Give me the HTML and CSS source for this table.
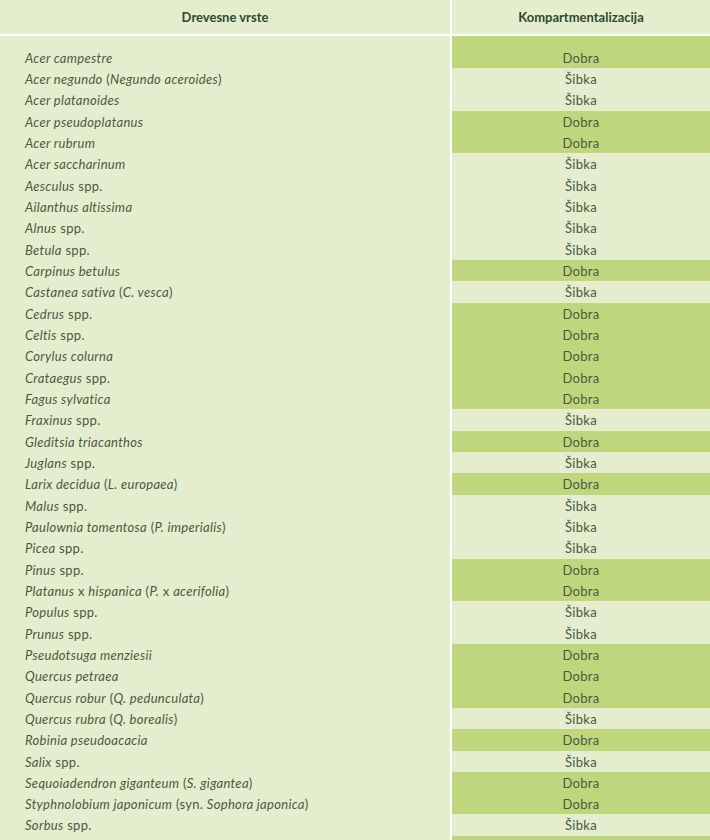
FILE: index.html
```html
<!DOCTYPE html>
<html lang="sl">
<head>
<meta charset="utf-8">
<title>Kompartmentalizacija</title>
<link rel="stylesheet" href="styles.css">
</head>
<body>
<table class="tbl">
  <thead>
    <tr>
      <th class="c-name">Drevesne vrste</th>
      <th class="c-val">Kompartmentalizacija</th>
    </tr>
  </thead>
  <tbody>
    <tr class="first"><td class="c-name"><i>Acer campestre</i></td><td class="c-val good">Dobra</td></tr>
    <tr><td class="c-name"><i>Acer negundo</i> (<i>Negundo aceroides</i>)</td><td class="c-val">Šibka</td></tr>
    <tr><td class="c-name"><i>Acer platanoides</i></td><td class="c-val">Šibka</td></tr>
    <tr><td class="c-name"><i>Acer pseudoplatanus</i></td><td class="c-val good">Dobra</td></tr>
    <tr><td class="c-name"><i>Acer rubrum</i></td><td class="c-val good">Dobra</td></tr>
    <tr><td class="c-name"><i>Acer saccharinum</i></td><td class="c-val">Šibka</td></tr>
    <tr><td class="c-name"><i>Aesculus</i> spp.</td><td class="c-val">Šibka</td></tr>
    <tr><td class="c-name"><i>Ailanthus altissima</i></td><td class="c-val">Šibka</td></tr>
    <tr><td class="c-name"><i>Alnus</i> spp.</td><td class="c-val">Šibka</td></tr>
    <tr><td class="c-name"><i>Betula</i> spp.</td><td class="c-val">Šibka</td></tr>
    <tr><td class="c-name"><i>Carpinus betulus</i></td><td class="c-val good">Dobra</td></tr>
    <tr><td class="c-name"><i>Castanea sativa</i> (<i>C. vesca</i>)</td><td class="c-val">Šibka</td></tr>
    <tr><td class="c-name"><i>Cedrus</i> spp.</td><td class="c-val good">Dobra</td></tr>
    <tr><td class="c-name"><i>Celtis</i> spp.</td><td class="c-val good">Dobra</td></tr>
    <tr><td class="c-name"><i>Corylus colurna</i></td><td class="c-val good">Dobra</td></tr>
    <tr><td class="c-name"><i>Crataegus</i> spp.</td><td class="c-val good">Dobra</td></tr>
    <tr><td class="c-name"><i>Fagus sylvatica</i></td><td class="c-val good">Dobra</td></tr>
    <tr><td class="c-name"><i>Fraxinus</i> spp.</td><td class="c-val">Šibka</td></tr>
    <tr><td class="c-name"><i>Gleditsia triacanthos</i></td><td class="c-val good">Dobra</td></tr>
    <tr><td class="c-name"><i>Juglans</i> spp.</td><td class="c-val">Šibka</td></tr>
    <tr><td class="c-name"><i>Larix decidua</i> (<i>L. europaea</i>)</td><td class="c-val good">Dobra</td></tr>
    <tr><td class="c-name"><i>Malus</i> spp.</td><td class="c-val">Šibka</td></tr>
    <tr><td class="c-name"><i>Paulownia tomentosa</i> (<i>P. imperialis</i>)</td><td class="c-val">Šibka</td></tr>
    <tr><td class="c-name"><i>Picea</i> spp.</td><td class="c-val">Šibka</td></tr>
    <tr><td class="c-name"><i>Pinus</i> spp.</td><td class="c-val good">Dobra</td></tr>
    <tr><td class="c-name"><i>Platanus</i> x <i>hispanica</i> (<i>P.</i> x <i>acerifolia</i>)</td><td class="c-val good">Dobra</td></tr>
    <tr><td class="c-name"><i>Populus</i> spp.</td><td class="c-val">Šibka</td></tr>
    <tr><td class="c-name"><i>Prunus</i> spp.</td><td class="c-val">Šibka</td></tr>
    <tr><td class="c-name"><i>Pseudotsuga menziesii</i></td><td class="c-val good">Dobra</td></tr>
    <tr><td class="c-name"><i>Quercus petraea</i></td><td class="c-val good">Dobra</td></tr>
    <tr><td class="c-name"><i>Quercus robur</i> (<i>Q. pedunculata</i>)</td><td class="c-val good">Dobra</td></tr>
    <tr><td class="c-name"><i>Quercus rubra</i> (<i>Q. borealis</i>)</td><td class="c-val">Šibka</td></tr>
    <tr><td class="c-name"><i>Robinia pseudoacacia</i></td><td class="c-val good">Dobra</td></tr>
    <tr><td class="c-name"><i>Salix</i> spp.</td><td class="c-val">Šibka</td></tr>
    <tr><td class="c-name"><i>Sequoiadendron giganteum</i> (<i>S. gigantea</i>)</td><td class="c-val good">Dobra</td></tr>
    <tr><td class="c-name"><i>Styphnolobium japonicum</i> (syn. <i>Sophora japonica</i>)</td><td class="c-val good">Dobra</td></tr>
    <tr><td class="c-name"><i>Sorbus</i> spp.</td><td class="c-val">Šibka</td></tr>
    <tr class="last"><td class="c-name"></td><td class="c-val good"></td></tr>
  </tbody>
</table>
</body>
</html>
```

FILE: styles.css
```css
html, body {
  margin: 0;
  padding: 0;
  background: #e4eecf;
}

.tbl {
  width: 710px;
  border-collapse: collapse;
  table-layout: fixed;
  font-family: Lato, "Open Sans", sans-serif;
  font-size: 13px;
  color: #4a5941;
  background: #e4eecf;
}

.tbl th, .tbl td {
  padding: 0;
}

.tbl .c-name {
  width: 450px;
  border-right: 2px solid #ffffff;
}

.tbl th {
  height: 34px;
  font-weight: 700;
  font-size: 13px;
  color: #2d4a2c;
  text-align: center;
  vertical-align: middle;
  border-bottom: 2px solid #ffffff;
  line-height: 34px;
}

.tbl td {
  height: 19.33px;
  padding-top: 2px;
  line-height: 19.33px;
  vertical-align: bottom;
  letter-spacing: 0.3px;
  white-space: nowrap;
}

.tbl td.c-name {
  padding-left: 25px;
  text-align: left;
}

.tbl td.c-val {
  text-align: center;
}

.tbl td.good {
  background: #bed77c;
}

.tbl tr.first td {
  height: 30px;
}
```
